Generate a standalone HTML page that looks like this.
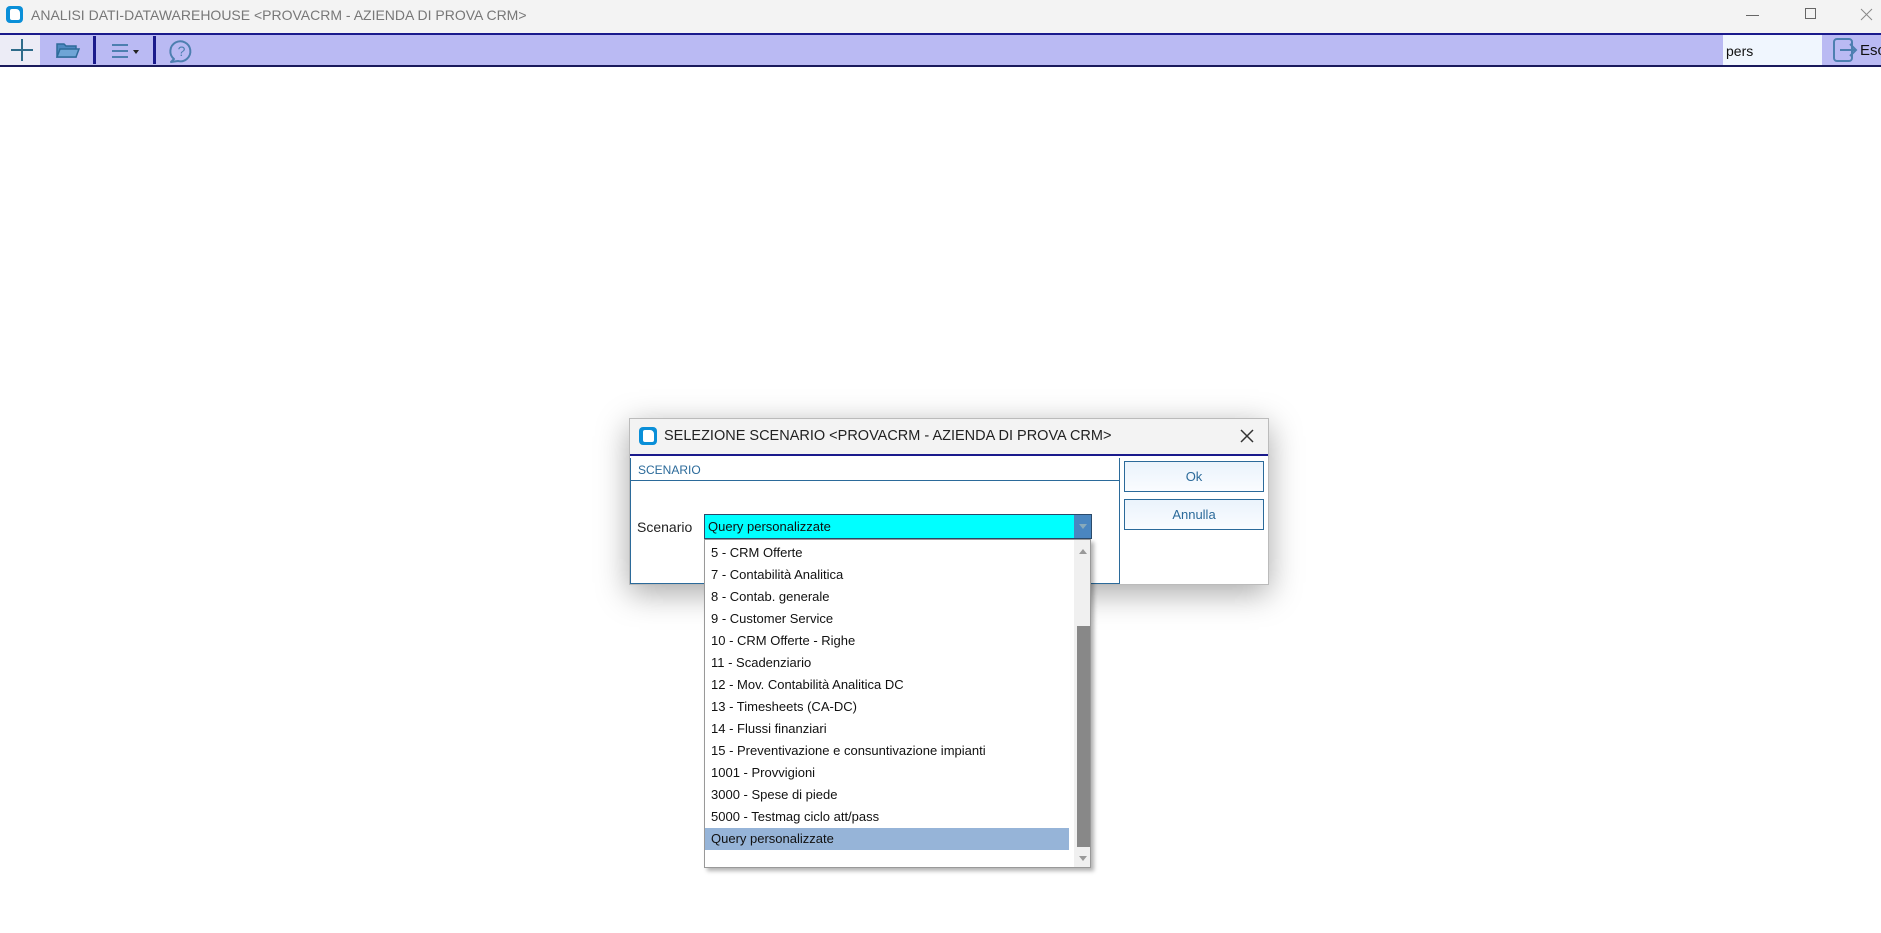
<!DOCTYPE html>
<html><head><style>
*{margin:0;padding:0;box-sizing:border-box}
body{width:1881px;height:933px;background:#fff;font-family:"Liberation Sans",sans-serif;position:relative;overflow:hidden}
.a{position:absolute}
</style></head><body>
<div class="a" style="left:0;top:0;width:1881px;height:33px;background:#f3f3f3"></div>
<div class="a" style="left:6px;top:6px;width:17px;height:17px;background:#0a8fd8;border-radius:4px"><div class="a" style="left:4px;top:3px;width:10px;height:11px;background:#fff;border-radius:2px 4px 2px 2px"></div></div>
<div class="a" style="left:31px;top:7px;font-size:14px;color:#777">ANALISI DATI-DATAWAREHOUSE &lt;PROVACRM - AZIENDA DI PROVA CRM&gt;</div>
<div class="a" style="left:1746px;top:15px;width:13px;height:1px;background:#666"></div>
<div class="a" style="left:1805px;top:8px;width:11px;height:11px;border:1px solid #666"></div>
<svg class="a" style="left:1860px;top:8px" width="13" height="13"><path d="M1 1L12 12M12 1L1 12" stroke="#888" stroke-width="1"/></svg>
<div class="a" style="left:0;top:33px;width:1881px;height:34px;background:#babaf3;border-top:2px solid #1a1a8c;border-bottom:2px solid #1a1a5c"></div>
<div class="a" style="left:0;top:35px;width:40px;height:30px;background:#ececf6"></div>
<svg class="a" style="left:9px;top:37px" width="26" height="26"><path d="M13 2V24M2 13H24" stroke="#2e6b8a" stroke-width="2"/></svg>
<svg class="a" style="left:55px;top:40px" width="26" height="22"><path d="M2 4H9L11 6H21V17H2Z" fill="#4d88c0" stroke="#2e6b9a" stroke-width="1.5"/><path d="M2 17L5 9H24L21 17Z" fill="#6fa5d6" stroke="#2e6b9a" stroke-width="1.5"/></svg>
<div class="a" style="left:93px;top:36px;width:3px;height:28px;background:#1a1a8c"></div>
<svg class="a" style="left:110px;top:40px" width="32" height="22"><path d="M2 5H18M2 11H18M2 17H18" stroke="#4d7fb0" stroke-width="2"/><path d="M23 10H29L26 14Z" fill="#222"/></svg>
<div class="a" style="left:153px;top:36px;width:3px;height:28px;background:#1a1a8c"></div>
<svg class="a" style="left:167px;top:37px" width="28" height="28"><path d="M7 22A10 10 0 1 1 11 24L4 25Z" fill="none" stroke="#4d7fb0" stroke-width="2" stroke-linejoin="round"/><text x="14.5" y="19" font-size="14" text-anchor="middle" fill="#4d7fb0" font-family="Liberation Sans">?</text></svg>
<div class="a" style="left:1723px;top:35px;width:99px;height:30px;background:#f0f6fe"></div>
<div class="a" style="left:1726px;top:43px;font-size:14px;color:#111">pers</div>
<svg class="a" style="left:1832px;top:36px" width="26" height="28"><rect x="2" y="3" width="18" height="22" rx="3" fill="none" stroke="#4d7fb0" stroke-width="2"/><path d="M8 14H24M18 8L24 14L18 20" fill="none" stroke="#4d7fb0" stroke-width="2"/></svg>
<div class="a" style="left:1860px;top:42px;font-size:15px;color:#111">Esc</div>

<div class="a" style="left:629px;top:418px;width:640px;height:167px;background:#fff;border:1px solid #bbb;box-shadow:0 8px 30px rgba(0,0,0,.35)"></div>
<div class="a" style="left:630px;top:419px;width:638px;height:37px;background:#f3f3f3;border-bottom:2px solid #1a1a8c"></div>
<div class="a" style="left:639px;top:427px;width:18px;height:18px;background:#0a8fd8;border-radius:4px"><div class="a" style="left:4px;top:3px;width:11px;height:12px;background:#fff;border-radius:2px 4px 2px 2px"></div></div>
<div class="a" style="left:664px;top:428px;font-size:14.5px;color:#222">SELEZIONE SCENARIO &lt;PROVACRM - AZIENDA DI PROVA CRM&gt;</div>
<svg class="a" style="left:1240px;top:429px" width="14" height="14"><path d="M1 1L13 13M13 1L1 13" stroke="#333" stroke-width="1.5"/></svg>
<div class="a" style="left:630px;top:458px;width:490px;height:126px;border:1px solid #2b6a9a;border-top:none"></div>
<div class="a" style="left:638px;top:463px;font-size:12px;color:#2b6a9a">SCENARIO</div>
<div class="a" style="left:630px;top:480px;width:490px;height:1px;background:#2b6a9a"></div>
<div class="a" style="left:1124px;top:461px;width:140px;height:31px;border:1px solid #2b6a9a;background:linear-gradient(#eaf3fc,#fafcff);font-size:13px;color:#2b6a9a;text-align:center;line-height:29px">Ok</div>
<div class="a" style="left:1124px;top:499px;width:140px;height:31px;border:1px solid #2b6a9a;background:linear-gradient(#eaf3fc,#fafcff);font-size:13px;color:#2b6a9a;text-align:center;line-height:29px">Annulla</div>
<div class="a" style="left:637px;top:519px;font-size:14px;color:#222">Scenario</div>
<div class="a" style="left:704px;top:514px;width:388px;height:25px;background:#00ffff;border:1px solid #2b4a6a;font-size:13px;color:#111;padding:3px 3px;line-height:17px">Query personalizzate</div>
<div class="a" style="left:1074px;top:515px;width:17px;height:23px;background:#4a86c0"><div class="a" style="left:5px;top:9px;border-left:4px solid transparent;border-right:4px solid transparent;border-top:5px solid #8ab"></div></div>

<div class="a" style="left:704px;top:539px;width:387px;height:329px;background:#fff;border:1px solid #999;box-shadow:3px 3px 4px rgba(0,0,0,.3);font-size:13px;color:#111">
<div style="padding-top:2px;line-height:22px">
<div style="padding-left:6px">5 - CRM Offerte</div>
<div style="padding-left:6px">7 - Contabilità Analitica</div>
<div style="padding-left:6px">8 - Contab. generale</div>
<div style="padding-left:6px">9 - Customer Service</div>
<div style="padding-left:6px">10 - CRM Offerte - Righe</div>
<div style="padding-left:6px">11 - Scadenziario</div>
<div style="padding-left:6px">12 - Mov. Contabilità Analitica DC</div>
<div style="padding-left:6px">13 - Timesheets (CA-DC)</div>
<div style="padding-left:6px">14 - Flussi finanziari</div>
<div style="padding-left:6px">15 - Preventivazione e consuntivazione impianti</div>
<div style="padding-left:6px">1001 - Provvigioni</div>
<div style="padding-left:6px">3000 - Spese di piede</div>
<div style="padding-left:6px">5000 - Testmag ciclo att/pass</div>
<div style="padding-left:6px;background:#96b4d8;width:364px">Query personalizzate</div>
</div>
<div class="a" style="left:369px;top:0;width:16px;height:327px;background:#f0f0f0"></div>
<div class="a" style="left:372px;top:86px;width:13px;height:221px;background:#888"></div>
<div class="a" style="left:374px;top:9px;border-left:4px solid transparent;border-right:4px solid transparent;border-bottom:5px solid #999"></div>
<div class="a" style="left:374px;top:316px;border-left:4px solid transparent;border-right:4px solid transparent;border-top:5px solid #999"></div>
</div>
</body></html>
